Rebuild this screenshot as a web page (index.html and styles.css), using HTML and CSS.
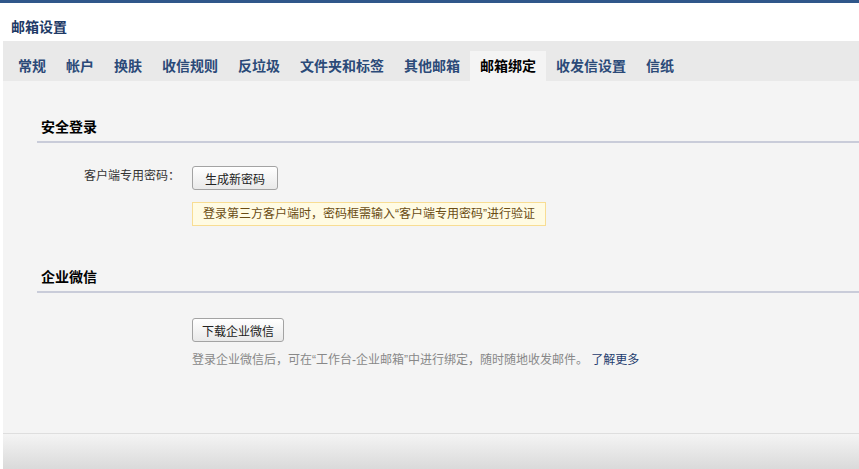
FILE: index.html
```html
<!DOCTYPE html>
<html lang="zh-CN">
<head>
    <meta charset="UTF-8">
    <title>邮箱设置</title>
    <link rel="stylesheet" href="styles.css">
</head>
<body>
    <div class="topbar"></div>
    <div class="page">
        <div class="header">邮箱设置</div>
        <div class="tabs">
            <a class="tab">常规</a>
            <a class="tab">帐户</a>
            <a class="tab">换肤</a>
            <a class="tab">收信规则</a>
            <a class="tab">反垃圾</a>
            <a class="tab">文件夹和标签</a>
            <a class="tab">其他邮箱</a>
            <a class="tab active">邮箱绑定</a>
            <a class="tab">收发信设置</a>
            <a class="tab">信纸</a>
        </div>

        <div class="content">
            <div class="section">
                <div class="section-title">安全登录</div>
                <div class="form-row row-first">
                    <div class="label">客户端专用密码：</div>
                    <button class="btn">生成新密码</button>
                </div>
                <div class="form-row">
                    <div class="label"></div>
                    <div class="hint">登录第三方客户端时，密码框需输入“客户端专用密码”进行验证</div>
                </div>
            </div>

            <div class="section section-wework">
                <div class="section-title">企业微信</div>
                <div class="form-row row-first">
                    <div class="label"></div>
                    <button class="btn">下载企业微信</button>
                </div>
                <div class="form-row desc-row">
                    <div class="label"></div>
                    <div class="desc">登录企业微信后，可在“工作台-企业邮箱”中进行绑定，随时随地收发邮件。 <a class="link">了解更多</a></div>
                </div>
            </div>
        </div>
        <div class="footer"></div>
    </div>
</body>
</html>
```

FILE: styles.css
```css
body {
    margin: 0;
    background: #fff;
    font-family: "Liberation Sans", "Noto Sans CJK SC", sans-serif;
    font-size: 12px;
    color: #333;
    overflow: hidden;
}
.topbar {
    height: 3px;
    background: #30578a;
}
.page {
    margin-left: 3px;
}
.header {
    height: 24px;
    padding: 14px 0 0 8px;
    line-height: 20px;
    font-size: 14px;
    font-weight: bold;
    color: #1e3a66;
}
.tabs {
    display: flex;
    height: 30px;
    padding: 10px 0 0 5px;
    background: #e9e9e9;
}
.tab {
    padding: 0 10px;
    line-height: 30px;
    font-size: 14px;
    font-weight: bold;
    color: #2b4a78;
    cursor: pointer;
}
.tab.active {
    background: #f4f4f4;
    color: #000;
}
.content {
    height: 353px;
    background: #f4f4f4;
    border-bottom: 1px solid #dedede;
    padding-left: 34px;
    box-sizing: border-box;
    padding-top: 36px;
}
.section-title {
    padding: 0 0 4px 4px;
    line-height: 20px;
    font-size: 14px;
    font-weight: bold;
    color: #000;
    border-bottom: 2px solid #c9ccd9;
}
.form-row {
    display: flex;
    align-items: center;
    margin-top: 12px;
}
.form-row.row-first {
    margin-top: 23px;
}
.label {
    width: 143px;
    margin-right: 12px;
    text-align: right;
    color: #333;
    line-height: 18px;
    margin-top: -5px;
}
.btn {
    height: 24px;
    min-width: 86px;
    padding: 0 9px;
    border: 1px solid #a3a3a3;
    border-radius: 3px;
    background: linear-gradient(#ffffff, #e9e9e9);
    font-family: inherit;
    font-size: 12px;
    color: #222;
    cursor: pointer;
}
.hint {
    padding: 0 10px;
    line-height: 22px;
    background: #fffbe3;
    border: 1px solid #f8dd93;
    color: #6a4c14;
}
.section-wework {
    margin-top: 41px;
}
.section-wework .form-row.row-first {
    margin-top: 25px;
}
.desc-row {
    margin-top: 9px;
}
.desc {
    line-height: 18px;
    color: #888;
}
.link {
    color: #1f3c6e;
    cursor: pointer;
}
.footer {
    height: 40px;
    background: linear-gradient(#f4f4f4, #d6d6d6);
}
```
